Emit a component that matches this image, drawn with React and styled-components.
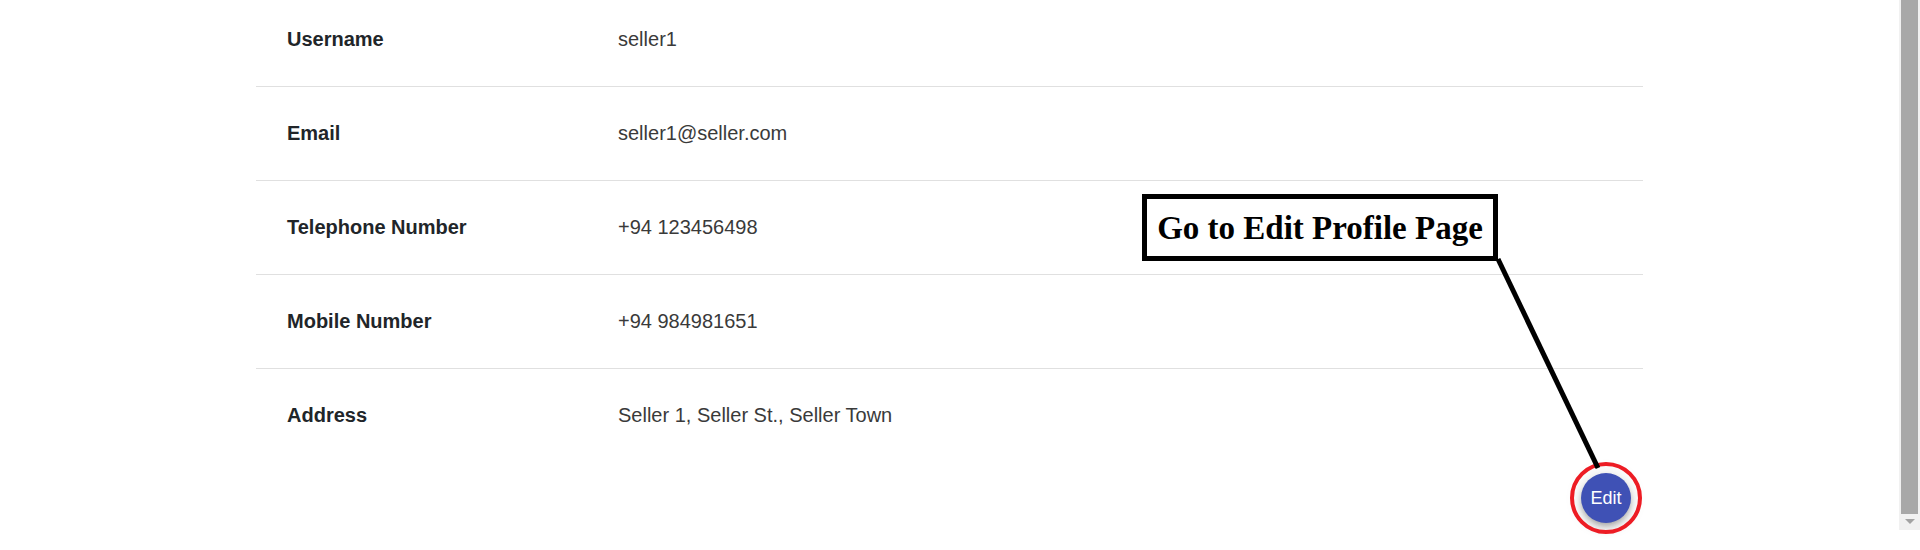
import React from 'react';
import styled, { createGlobalStyle } from 'styled-components';

const GlobalStyle = createGlobalStyle`
  html, body {
    margin: 0;
    padding: 0;
    background: #fff;
    overflow: hidden;
  }
`;

const Screen = styled.div`
  display: flex;
  width: 1920px;
  height: 550px;
  overflow: hidden;
`;

const Main = styled.div`
  position: relative;
  flex: 1;
  display: flex;
  flex-direction: column;
  align-items: center;
`;

const Table = styled.div`
  width: 1387px;
  margin-top: -7px;
  font-family: "Liberation Sans", Arial, sans-serif;
  font-size: 20px;
`;

const Row = styled.div`
  display: grid;
  grid-template-columns: 362px 1fr;
  align-items: center;
  height: 93px;
  border-bottom: ${(props) => (props.last ? 'none' : '1px solid #e0e0e0')};
`;

const Label = styled.div`
  padding-left: 31px;
  font-weight: bold;
  color: #212529;
`;

const Value = styled.div`
  color: #3a3a3a;
`;

const Actions = styled.div`
  width: 1387px;
  display: flex;
  justify-content: flex-end;
  padding: 11px 12px 0 0;
  box-sizing: border-box;
`;

const Ring = styled.div`
  position: relative;
  width: 50px;
  height: 50px;

  &::after {
    content: '';
    position: absolute;
    inset: -11px;
    border: 4px solid #ed1c24;
    border-radius: 50%;
    pointer-events: none;
  }
`;

const EditButton = styled.button`
  width: 50px;
  height: 50px;
  border: none;
  border-radius: 50%;
  background: #3f51b5;
  color: #fff;
  font-family: "Liberation Sans", Arial, sans-serif;
  font-size: 18px;
  padding: 0;
  cursor: pointer;
  box-shadow: 0 3px 5px -1px rgba(0, 0, 0, 0.2), 0 6px 10px 0 rgba(0, 0, 0, 0.14),
    0 1px 18px 0 rgba(0, 0, 0, 0.12);
`;

const Callout = styled.div`
  position: absolute;
  left: 1142px;
  top: 194px;
  width: 346px;
  height: 55px;
  border: 5px solid #000;
  background: #fff;
  display: flex;
  align-items: center;
  justify-content: center;
  font-family: "Liberation Serif", "Times New Roman", serif;
  font-weight: bold;
  font-size: 33px;
  color: #000;
  padding-top: 2px;
  box-sizing: content-box;
`;

const Leader = styled.svg`
  position: absolute;
  left: 1490px;
  top: 250px;
  overflow: visible;
`;

const Scrollbar = styled.div`
  flex: none;
  width: 21px;
  height: 530px;
  background: #f1f1f1;
  display: flex;
  flex-direction: column;
  align-items: center;
`;

const Thumb = styled.div`
  width: 17px;
  height: 514px;
  background: #a8a8a8;
`;

const ArrowDown = styled.div`
  margin-top: 5px;
  width: 0;
  height: 0;
  border-left: 5px solid transparent;
  border-right: 5px solid transparent;
  border-top: 5px solid #a3a3a3;
`;

const rows = [
  ['Username', 'seller1'],
  ['Email', 'seller1@seller.com'],
  ['Telephone Number', '+94 123456498'],
  ['Mobile Number', '+94 984981651'],
  ['Address', 'Seller 1, Seller St., Seller Town'],
];

export default function App() {
  return (
    <Screen>
      <GlobalStyle />
      <Main>
        <Table>
          {rows.map(([label, value], i) => (
            <Row key={label} last={i === rows.length - 1}>
              <Label>{label}</Label>
              <Value>{value}</Value>
            </Row>
          ))}
        </Table>
        <Actions>
          <Ring>
            <EditButton>Edit</EditButton>
          </Ring>
        </Actions>
        <Callout>Go to Edit Profile Page</Callout>
        <Leader width="120" height="230">
          <line x1="8" y1="9" x2="108" y2="218" stroke="#000" strokeWidth="5" />
        </Leader>
      </Main>
      <Scrollbar>
        <Thumb />
        <ArrowDown />
      </Scrollbar>
    </Screen>
  );
}
